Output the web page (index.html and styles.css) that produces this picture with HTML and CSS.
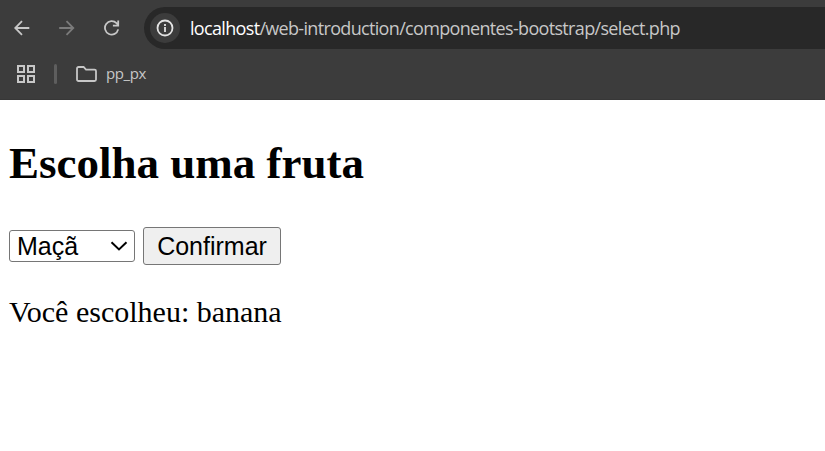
FILE: index.html
```html
<!DOCTYPE html>
<html lang="pt-BR">
<head>
<meta charset="utf-8">
<title>Escolha uma fruta</title>
<link rel="stylesheet" href="styles.css">
</head>
<body>
<header class="browser">
  <nav class="toolbar">
    <svg class="nav-icon" viewBox="0 0 16 16"><path d="M15.3 8H1.5M8 1.2 1.2 8 8 14.8"/></svg>
    <svg class="nav-icon disabled" viewBox="0 0 16 16"><path d="M.2 8h13.8M7.5 1.2 14.3 8 7.5 14.8"/></svg>
    <svg class="nav-icon" viewBox="0 0 16 16"><path d="M14.2 9.4A6.7 6.7 0 1 1 12.5 3.2L14.2 5M14.2.4V5.6H8.9"/></svg>
    <div class="address">
      <span class="info"><svg viewBox="0 0 18 18"><circle cx="9" cy="9" r="7.5"/><path d="M9 8v5M9 5v2"/></svg></span>
      <span class="url"><span class="host">localhost</span>/web-introduction/componentes-bootstrap/select.php</span>
    </div>
  </nav>
  <nav class="bookmarks">
    <svg class="apps" viewBox="0 0 18 18"><path d="M1 1h6v6H1zM11 1h6v6h-6zM1 11h6v6H1zM11 11h6v6h-6z"/></svg>
    <span class="divider"></span>
    <svg class="folder" viewBox="0 0 21 16"><path d="M2.5 1H7.6L10 3.6h8.5a1.5 1.5 0 0 1 1.5 1.5v8.4a1.5 1.5 0 0 1-1.5 1.5h-16A1.5 1.5 0 0 1 1 13.5v-11A1.5 1.5 0 0 1 2.5 1z"/></svg>
    <span class="bookmark">pp_px</span>
  </nav>
</header>
<main>
  <h2>Escolha uma fruta</h2>
  <form class="controls">
    <div class="select-wrap">
      <select name="fruta"><option>Maçã</option><option>Banana</option></select>
      <svg class="chevron" viewBox="0 0 18 10"><path d="M1.5 1.2 9 8.4l7.5-7.2"/></svg>
    </div>
    <button type="button">Confirmar</button>
  </form>
  <p>Você escolheu: <span>banana</span></p>
</main>
</body>
</html>
```

FILE: styles.css
```css
* { box-sizing: border-box; }
body { margin: 0; background: #fff; color: #000; overflow: hidden; }
svg { display: block; fill: none; flex: none; }
.browser { height: 100px; background: #3c3c3c; font-family: "Open Sans", sans-serif; border-bottom: 1px solid #373737; }
.toolbar { display: flex; align-items: center; height: 49px; padding: 7px 0 0 14px; }
.nav-icon { width: 16px; height: 16px; margin-right: 29px; stroke: #c7c7c7; stroke-width: 1.8; }
.nav-icon.disabled { stroke: #7b7b7b; }
.address { display: flex; align-items: center; flex: 1; height: 42px; margin-left: -5px; padding-left: 6px; background: #282828; border-radius: 21px 0 0 21px; }
.info { display: flex; align-items: center; justify-content: center; width: 30px; height: 30px; border-radius: 50%; background: #3c3c3c; }
.info svg { width: 18px; height: 18px; stroke: #e3e3e3; stroke-width: 1.8; }
.url { margin-left: 10px; font-size: 18px; letter-spacing: -0.67px; color: #c7c7c7; white-space: nowrap; }
.host { color: #fff; }
.bookmarks { display: flex; align-items: center; height: 50px; padding-left: 17px; }
.apps { width: 18px; height: 18px; stroke: #c7c7c7; stroke-width: 2; }
.divider { width: 3px; height: 20px; margin: 0 21px 0 19px; border-radius: 2px; background: #5e5e5e; }
.folder { width: 21px; height: 16px; margin-left: -2px; stroke: #c7c7c7; stroke-width: 1.8; }
.bookmark { margin-left: 9px; padding-bottom: 2px; font-size: 15px; letter-spacing: -0.4px; color: #c7c7c7; }
main { padding: 0 9px; font-family: "Liberation Serif", serif; }
h2 { margin: 37px 0 37px; font-size: 45px; line-height: 53px; white-space: nowrap; }
.controls { display: flex; align-items: center; gap: 8px; height: 38px; margin: 0; }
.select-wrap { position: relative; width: 126px; height: 32px; }
select { appearance: none; width: 100%; height: 100%; padding: 0 0 0 7px; border: 1px solid #767676; border-radius: 3px; background: #fff; color: #000; font: 25px "Liberation Sans", sans-serif; }
.chevron { position: absolute; right: 7px; top: 11px; width: 18px; height: 10px; stroke: #000; stroke-width: 2; pointer-events: none; }
button { width: 138px; height: 38px; padding: 0; border: 1px solid #767676; border-radius: 3px; background: #efefef; color: #000; font: 25px "Liberation Sans", sans-serif; }
p { margin: 30px 0 0; font-size: 30px; line-height: 34px; white-space: nowrap; }
```
